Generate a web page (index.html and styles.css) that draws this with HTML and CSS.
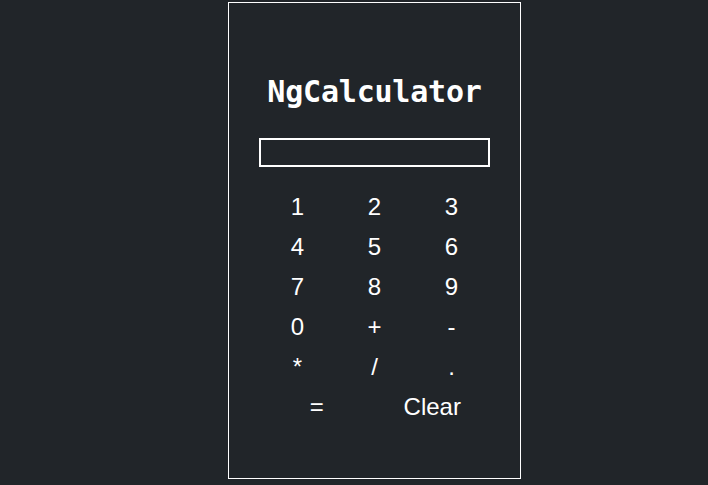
FILE: index.html
```html
<!DOCTYPE html>
<html lang="en">
<head>
<meta charset="utf-8">
<title>NgCalculator</title>
<link rel="stylesheet" href="styles.css">
</head>
<body>
<div class="page">
  <div class="card">
    <h1 class="title">NgCalculator</h1>
    <input class="display" type="text">
    <div class="keys">
      <button class="key">1</button>
      <button class="key">2</button>
      <button class="key">3</button>
      <button class="key">4</button>
      <button class="key">5</button>
      <button class="key">6</button>
      <button class="key">7</button>
      <button class="key">8</button>
      <button class="key">9</button>
      <button class="key">0</button>
      <button class="key">+</button>
      <button class="key">-</button>
      <button class="key">*</button>
      <button class="key">/</button>
      <button class="key">.</button>
    </div>
    <div class="keys-last">
      <button class="key">=</button>
      <button class="key">Clear</button>
    </div>
  </div>
</div>
</body>
</html>
```

FILE: styles.css
```css
html, body {
  margin: 0;
  padding: 0;
  background: #212529;
  height: 100%;
}
.page {
  padding: 2px 0 0 228px;
}
.card {
  width: 231px;
  padding: 71px 30px 51px;
  border: 1px solid #ffffff;
}
.title {
  margin: 0 0 28px;
  font-family: "DejaVu Sans Mono", monospace;
  font-weight: bold;
  font-size: 30px;
  line-height: 36px;
  letter-spacing: -0.2px;
  color: #ffffff;
  text-align: center;
}
.display {
  display: block;
  box-sizing: border-box;
  width: 231px;
  height: 29px;
  margin: 0 0 20px;
  padding: 0 4px;
  border: 2px solid #ffffff;
  background: transparent;
  color: #ffffff;
  outline: none;
}
.keys {
  display: grid;
  grid-template-columns: repeat(3, 1fr);
}
.keys-last {
  display: grid;
  grid-template-columns: repeat(2, 1fr);
}
.key {
  height: 40px;
  padding: 0;
  border: none;
  background: transparent;
  color: #ffffff;
  font-family: "Liberation Sans", Arial, sans-serif;
  font-size: 24px;
  line-height: 40px;
  text-align: center;
  cursor: pointer;
}
```
